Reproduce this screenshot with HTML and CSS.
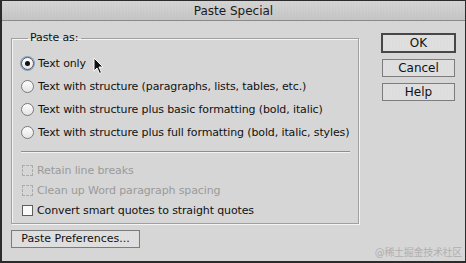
FILE: index.html
```html
<!DOCTYPE html>
<html lang="en">
<head>
  <meta charset="UTF-8">
  <meta name="viewport" content="width=device-width, initial-scale=1.0">
  <title>Paste Special</title>
  <link rel="stylesheet" href="styles.css">
</head>
<body>
  <div class="dialog">
    <div class="dialog__title">Paste Special</div>
    <div class="dialog__body">
      <div class="dialog__main">
        <fieldset class="group">
          <legend>Paste as:</legend>
          <label class="row"><span class="radio checked"></span>Text only</label>
          <label class="row"><span class="radio"></span>Text with structure (paragraphs, lists, tables, etc.)</label>
          <label class="row"><span class="radio"></span>Text with structure plus basic formatting (bold, italic)</label>
          <label class="row"><span class="radio"></span>Text with structure plus full formatting (bold, italic, styles)</label>
          <hr class="sep">
          <label class="row check disabled"><span class="box"></span>Retain line breaks</label>
          <label class="row check disabled"><span class="box"></span>Clean up Word paragraph spacing</label>
          <label class="row check"><span class="box"></span>Convert smart quotes to straight quotes</label>
        </fieldset>
        <a href="javascript:void(0);" class="btn btn--wide">Paste Preferences...</a>
      </div>
      <div class="dialog__side">
        <a href="javascript:void(0);" class="btn btn--default">OK</a>
        <a href="javascript:void(0);" class="btn">Cancel</a>
        <a href="javascript:void(0);" class="btn">Help</a>
      </div>
    </div>

    <!-- mouse pointer over the first option -->
    <svg class="cursor" width="12" height="18" viewBox="0 0 12 18">
      <path d="M1 1 L1 14 L4 11 L6.5 16.5 L8.5 15.5 L6 10 L10 10 Z" fill="#111" stroke="#fff" stroke-width="1"/>
    </svg>
    <span class="watermark">@稀土掘金技术社区</span>
  </div>
</body>
</html>
```

FILE: styles.css
```css
/* reset */
* {
  margin: 0;
  padding: 0;
  box-sizing: border-box;
}
a {
  text-decoration: none;
  color: inherit;
}
body {
  width: 466px;
  height: 263px;
  overflow: hidden;
  font-family: "DejaVu Sans", "Noto Sans CJK SC", sans-serif;
  font-size: 11px;
  letter-spacing: -0.12px;
  color: #111;
  background: #2b2b2b;
}

/* dialog */
.dialog {
  position: relative;
  height: 261px;
  margin: 0 1px 0 2px;
  border-top: 1px solid #2b2b2b;
  background: #d6d6d6;
}
.dialog__title {
  height: 20px;
  line-height: 20px;
  text-align: center;
  font-size: 12px;
  letter-spacing: 0;
  color: #1a1a1a;
  background:
    linear-gradient(rgba(255, 255, 255, 0.25), rgba(255, 255, 255, 0)),
    repeating-linear-gradient(90deg, #c9c9c9 0, #bdbdbd 1px, #cbcbcb 2px, #c2c2c2 3px);
  border-bottom: 1px solid #8a8a8a;
}
.dialog__body {
  display: flex;
  padding: 10px 0 0 9px;
}
.dialog__main {
  width: 348px;
}
.dialog__side {
  display: flex;
  flex-direction: column;
  gap: 6px;
  margin-left: 22px;
  padding-top: 2px;
}

/* group box */
.group {
  border: 1px solid #a0a0a0;
  box-shadow: 1px 1px 0 #f4f4f4, inset 1px 1px 0 #f4f4f4;
  padding: 7px 0 10px 9px;
  height: 193px;
}
.group legend {
  margin-left: 7px;
  padding: 0 3px 0 2px;
  line-height: 14px;
}
.row {
  display: flex;
  align-items: center;
  gap: 4px;
  height: 23px;
  white-space: nowrap;
}
.radio {
  width: 13px;
  height: 13px;
  border-radius: 50%;
  border: 1px solid #7a7a7a;
  background: linear-gradient(#fdfdfd, #e4e4e4);
  position: relative;
}
.radio.checked {
  border-color: #4d5a66;
  box-shadow: 0 0 0 1px #8aa0b4;
}
.radio.checked::after {
  content: "";
  position: absolute;
  left: 3px;
  top: 3px;
  width: 5px;
  height: 5px;
  border-radius: 50%;
  background: #111;
}
.sep {
  border: 0;
  border-top: 1px solid #8e8e8e;
  border-bottom: 1px solid #f2f2f2;
  margin: 7px 8px 7px 0;
}
.row.check {
  height: 20px;
  gap: 4px;
  padding-left: 1px;
}
.box {
  width: 11px;
  height: 11px;
  border: 1px solid #5e5e5e;
  background: #fafafa;
}
.row.disabled {
  color: #9a9a9a;
}
.row.disabled .box {
  border: 1px dashed #ababab;
  background: transparent;
}

/* buttons */
.btn {
  display: block;
  width: 73px;
  height: 18px;
  line-height: 16px;
  text-align: center;
  white-space: nowrap;
  border: 1px solid #7c7c7c;
  background: repeating-linear-gradient(90deg, #e2e2e2 0, #d8d8d8 1px, #e4e4e4 2px, #dbdbdb 3px);
  font-size: 12px;
  letter-spacing: 0;
}
.btn--default {
  width: 75px;
  height: 20px;
  line-height: 16px;
  border: 2px solid #474747;
}
.btn--default + .btn,
.btn--default + .btn + .btn {
  margin-left: 1px;
}
.btn--wide {
  width: 129px;
  margin-top: 6px;
  font-size: 11px;
}

/* overlays */
.cursor {
  position: absolute;
  left: 91px;
  top: 56px;
}
.watermark {
  position: absolute;
  right: 3px;
  bottom: 2px;
  font-size: 10px;
  letter-spacing: -0.3px;
  color: #b0b0b0;
}
```
